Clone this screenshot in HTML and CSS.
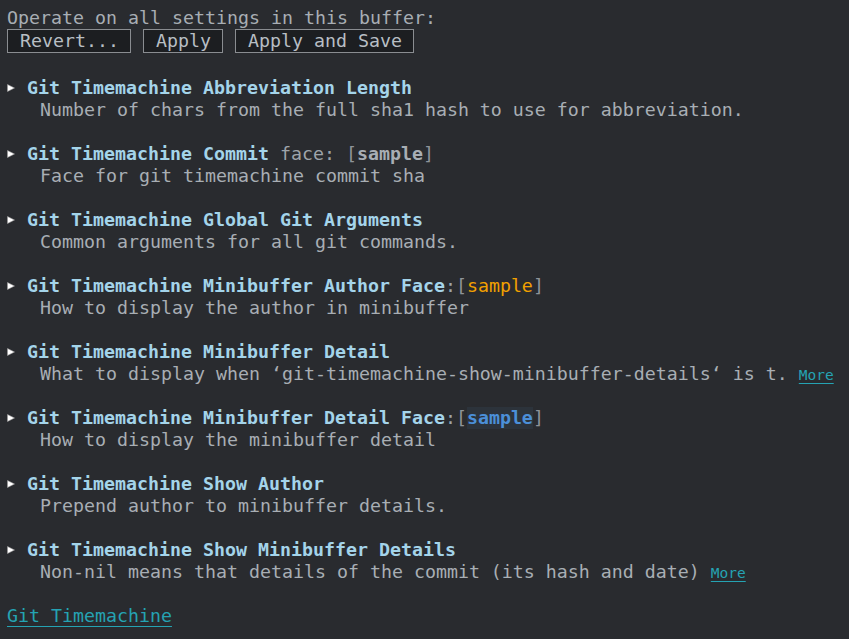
FILE: index.html
```html
<!DOCTYPE html>
<html>
<head>
<meta charset="utf-8">
<link rel="stylesheet" href="styles.css">
</head>
<body>
<div class="buffer">
  <div class="line">Operate on all settings in this buffer:</div>
  <div class="buttons"><span class="btn">Revert...</span><span class="btn">Apply</span><span class="btn">Apply and Save</span></div>
  <div class="blank"></div>

  <div class="item">
    <div class="head"><svg class="tri" viewBox="0 0 8 8" width="8" height="8"><polygon points="0.5,0.5 7.5,4 0.5,7.5" fill="#ffffff" stroke="#9a9a9a" stroke-width="0.6"/></svg><span class="name">Git Timemachine Abbreviation Length</span></div>
    <div class="doc">Number of chars from the full sha1 hash to use for abbreviation.</div>
  </div>

  <div class="item">
    <div class="head"><svg class="tri" viewBox="0 0 8 8" width="8" height="8"><polygon points="0.5,0.5 7.5,4 0.5,7.5" fill="#ffffff" stroke="#9a9a9a" stroke-width="0.6"/></svg><span class="name">Git Timemachine Commit</span><span class="plain"> face: </span><span class="br">[</span><span class="s-commit">sample</span><span class="br">]</span></div>
    <div class="doc">Face for git timemachine commit sha</div>
  </div>

  <div class="item">
    <div class="head"><svg class="tri" viewBox="0 0 8 8" width="8" height="8"><polygon points="0.5,0.5 7.5,4 0.5,7.5" fill="#ffffff" stroke="#9a9a9a" stroke-width="0.6"/></svg><span class="name">Git Timemachine Global Git Arguments</span></div>
    <div class="doc">Common arguments for all git commands.</div>
  </div>

  <div class="item">
    <div class="head"><svg class="tri" viewBox="0 0 8 8" width="8" height="8"><polygon points="0.5,0.5 7.5,4 0.5,7.5" fill="#ffffff" stroke="#9a9a9a" stroke-width="0.6"/></svg><span class="name">Git Timemachine Minibuffer Author Face</span><span class="plain">:</span><span class="br">[</span><span class="s-author">sample</span><span class="br">]</span></div>
    <div class="doc">How to display the author in minibuffer</div>
  </div>

  <div class="item">
    <div class="head"><svg class="tri" viewBox="0 0 8 8" width="8" height="8"><polygon points="0.5,0.5 7.5,4 0.5,7.5" fill="#ffffff" stroke="#9a9a9a" stroke-width="0.6"/></svg><span class="name">Git Timemachine Minibuffer Detail</span></div>
    <div class="doc">What to display when ‘git-timemachine-show-minibuffer-details‘ is t. <a class="more">More</a></div>
  </div>

  <div class="item">
    <div class="head"><svg class="tri" viewBox="0 0 8 8" width="8" height="8"><polygon points="0.5,0.5 7.5,4 0.5,7.5" fill="#ffffff" stroke="#9a9a9a" stroke-width="0.6"/></svg><span class="name">Git Timemachine Minibuffer Detail Face</span><span class="plain">:</span><span class="br">[</span><span class="s-detail">sample</span><span class="br">]</span></div>
    <div class="doc">How to display the minibuffer detail</div>
  </div>

  <div class="item">
    <div class="head"><svg class="tri" viewBox="0 0 8 8" width="8" height="8"><polygon points="0.5,0.5 7.5,4 0.5,7.5" fill="#ffffff" stroke="#9a9a9a" stroke-width="0.6"/></svg><span class="name">Git Timemachine Show Author</span></div>
    <div class="doc">Prepend author to minibuffer details.</div>
  </div>

  <div class="item">
    <div class="head"><svg class="tri" viewBox="0 0 8 8" width="8" height="8"><polygon points="0.5,0.5 7.5,4 0.5,7.5" fill="#ffffff" stroke="#9a9a9a" stroke-width="0.6"/></svg><span class="name">Git Timemachine Show Minibuffer Details</span></div>
    <div class="doc">Non-nil means that details of the commit (its hash and date) <a class="more">More</a></div>
  </div>

  <div class="line"><a class="group">Git Timemachine</a></div>
</div>
</body>
</html>
```

FILE: styles.css
```css
html, body {
  margin: 0;
  padding: 0;
  background: #292b2f;
  height: 100%;
}
body {
  font-family: "DejaVu Sans Mono", monospace;
  font-size: 18.27px;
  line-height: 22px;
  color: #a8aeb4;
}
.buffer {
  padding: 7px 7px 0 7px;
}
.line {
  height: 22px;
  white-space: pre;
}
.buttons {
  height: 26px;
  white-space: nowrap;
}
.btn {
  display: inline-block;
  vertical-align: top;
  line-height: 22px;
  padding: 0 11px 0 12px;
  border: 1px solid #8a8d91;
  background: #1c1e21;
  color: #b8bec4;
  margin-right: 12px;
  white-space: pre;
}
.blank {
  height: 22px;
}
.item {
  margin-bottom: 22px;
}
.head {
  height: 22px;
  display: flex;
  align-items: center;
}
.tri {
  display: block;
  width: 8px;
  height: 8px;
  margin: 0 12px 0 0;
  flex: none;
}
.head span {
  white-space: pre;
}
.name {
  font-weight: bold;
  color: #a4d4ea;
}
.plain {
  color: #9ea4aa;
}
.br {
  color: #8e9499;
}
.s-commit {
  font-weight: bold;
  color: #a8aeb4;
}
.s-author {
  color: #f2a100;
}
.s-detail {
  color: #4b8fd8;
  font-weight: bold;
  background: #2c333b;
}
.doc {
  padding-left: 33px;
  height: 22px;
  white-space: pre;
}
.more {
  font-size: 14.5px;
  color: #25a3b3;
  text-decoration: underline;
  text-underline-offset: 3px;
}
.group {
  color: #25a3b3;
  text-decoration: underline;
  text-underline-offset: 4px;
}
```
